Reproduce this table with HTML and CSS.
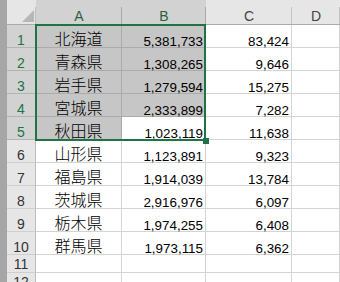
FILE: index.html
```html
<!DOCTYPE html>
<html lang="ja">
<head>
<meta charset="utf-8">
<title>Sheet</title>
<link rel="stylesheet" href="styles.css">
</head>
<body>
<div class="sheet">
  <div class="strip"></div>

  <div class="hd corner"><span class="tri"></span></div>
  <div class="hd sel">A</div>
  <div class="hd sel">B</div>
  <div class="hd">C</div>
  <div class="hd">D</div>

  <div class="rh sel">1</div><div class="c sel txt">北海道</div><div class="c sel num">5,381,733</div><div class="c num">83,424</div><div class="c"></div>
  <div class="rh sel">2</div><div class="c sel txt">青森県</div><div class="c sel num">1,308,265</div><div class="c num">9,646</div><div class="c"></div>
  <div class="rh sel">3</div><div class="c sel txt">岩手県</div><div class="c sel num">1,279,594</div><div class="c num">15,275</div><div class="c"></div>
  <div class="rh sel">4</div><div class="c sel txt">宮城県</div><div class="c sel num">2,333,899</div><div class="c num">7,282</div><div class="c"></div>
  <div class="rh sel">5</div><div class="c sel txt">秋田県</div><div class="c num">1,023,119</div><div class="c num">11,638</div><div class="c"></div>
  <div class="rh">6</div><div class="c txt">山形県</div><div class="c num">1,123,891</div><div class="c num">9,323</div><div class="c"></div>
  <div class="rh">7</div><div class="c txt">福島県</div><div class="c num">1,914,039</div><div class="c num">13,784</div><div class="c"></div>
  <div class="rh">8</div><div class="c txt">茨城県</div><div class="c num">2,916,976</div><div class="c num">6,097</div><div class="c"></div>
  <div class="rh">9</div><div class="c txt">栃木県</div><div class="c num">1,974,255</div><div class="c num">6,408</div><div class="c"></div>
  <div class="rh">10</div><div class="c txt">群馬県</div><div class="c num">1,973,115</div><div class="c num">6,362</div><div class="c"></div>
  <div class="rh short">11</div><div class="c"></div><div class="c"></div><div class="c"></div><div class="c"></div>
  <div class="rh short">12</div><div class="c"></div><div class="c"></div><div class="c"></div><div class="c"></div>

  <div class="selection"></div>
  <div class="handle"></div>
</div>
</body>
</html>
```

FILE: styles.css
```css
body {
  margin: 0;
  background: #ffffff;
}

.sheet {
  position: relative;
  display: grid;
  grid-template-columns: 7px 29px 86px 84px 86px 48px;
  grid-template-rows: 25px repeat(10, 23px) 18px 18px;
  width: 340px;
  height: 282px;
  overflow: hidden;
  font-family: "Liberation Sans", Arial, sans-serif;
  font-size: 13px;
  color: #000;
}

.strip {
  grid-column: 1;
  grid-row: 1 / -1;
  background: #a6a6a6;
}

.hd {
  position: relative;
  display: flex;
  align-items: flex-end;
  justify-content: center;
  box-sizing: border-box;
  padding-bottom: 2px;
  font-size: 14px;
  line-height: 12px;
  color: #444;
  border-bottom: 1px solid #ababab;
  background: linear-gradient(#c4c4c4, #c4c4c4) right 0 bottom 0 / 1px 17px no-repeat, #e6e6e6;
}

.hd.sel {
  color: #2d5e40;
  background: linear-gradient(#a9a9a9, #a9a9a9) right 0 bottom 0 / 1px 17px no-repeat, #d2d2d2;
}

.hd.corner {
  background: linear-gradient(#bdbdbd, #bdbdbd) right 0 bottom 0 / 1px 17px no-repeat, #e6e6e6;
}

.tri {
  position: absolute;
  left: 15px;
  top: 10px;
  width: 12px;
  height: 12px;
  background: #b7b7b7;
  clip-path: polygon(100% 0, 100% 100%, 0 100%);
}

.rh {
  display: flex;
  align-items: flex-end;
  justify-content: center;
  box-sizing: border-box;
  padding-bottom: 1px;
  font-size: 14px;
  line-height: 12px;
  color: #333;
  background: #e6e6e6;
  border-right: 1px solid #bcbcbc;
  border-bottom: 1px solid #cfcfcf;
}

.rh.short {
  padding-bottom: 2px;
}

.rh.sel {
  color: #217346;
  background: #d2d2d2;
  border-bottom-color: #b4b4b4;
}

.c {
  display: flex;
  align-items: flex-end;
  box-sizing: border-box;
  background: #ffffff;
  border-right: 1px solid #d4d4d4;
  border-bottom: 1px solid #d4d4d4;
}

.c.sel {
  background: #c6c6c6;
  border-right-color: #ababab;
  border-bottom-color: #ababab;
}

.txt {
  justify-content: center;
  font-family: "Noto Sans CJK JP", "Noto Sans CJK SC", sans-serif;
  font-weight: 300;
  font-size: 16px;
  line-height: 17px;
}

.num {
  justify-content: flex-end;
  padding-right: 2px;
  font-size: 13.4px;
  line-height: 11px;
}

.selection {
  position: absolute;
  left: 35px;
  top: 24px;
  width: 171px;
  height: 117px;
  box-sizing: border-box;
  border: 2px solid #217346;
  pointer-events: none;
}

.handle {
  position: absolute;
  left: 203px;
  top: 138px;
  width: 6px;
  height: 6px;
  background: #217346;
}
```
